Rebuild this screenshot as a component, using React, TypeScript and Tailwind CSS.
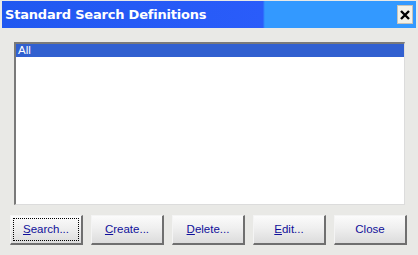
import React from "react";

const buttons = [
  { key: "S", rest: "earch...", focused: true },
  { key: "C", rest: "reate..." },
  { key: "D", rest: "elete..." },
  { key: "E", rest: "dit..." },
  { key: "", rest: "Close" },
];

function DlgButton({ k, rest, focused }: { k: string; rest: string; focused?: boolean }) {
  return (
    <button className="relative h-[30px] w-[73px] border-t border-l border-t-[#f4f4f4] border-l-[#f4f4f4] border-r-2 border-b-2 border-r-[#6f6f6f] border-b-[#6f6f6f] bg-[linear-gradient(to_bottom,#fbfbfb_0%,#efefef_45%,#dcdcdc_100%)] text-[11.5px] text-[#10109a] font-['Liberation_Sans',Arial,sans-serif]">
      {focused && (
        <span className="absolute inset-[2px] border border-dotted border-black" />
      )}
      {k && <span className="underline">{k}</span>}
      {rest}
    </button>
  );
}

export default function App() {
  return (
    <div className="w-[418px] h-[255px] bg-[#e9e9e6] pt-[1px] pl-[2px] pr-[2px] flex flex-col">
      {/* Title bar */}
      <div className="h-[27px] flex items-center pl-[3px] pr-[3px] bg-[linear-gradient(to_right,#2058f0_0%,#2a5cfa_63%,#3399ff_63.5%,#3399ff_100%)]">
        <span className="flex-1 text-white font-bold text-[13px] font-['DejaVu_Sans',Verdana,sans-serif] tracking-[-0.2px]">
          Standard Search Definitions
        </span>
        <div className="w-[16px] h-[19px] bg-[#f3f1e8] border border-[#c8c4b8] flex items-center justify-center">
          <svg width="10" height="10" viewBox="0 0 10 10">
            <path d="M1 1 L9 9 M9 1 L1 9" stroke="#000" strokeWidth="2.4" />
          </svg>
        </div>
      </div>

      {/* List */}
      <div className="mt-[14px] ml-[12px] mr-[11px] h-[163px] bg-white border-t-2 border-l-2 border-t-[#7a7a7a] border-l-[#7a7a7a] border-b border-r border-b-[#dcdcdc] border-r-[#dcdcdc]">
        <div className="h-[13px] bg-[#3160d0] text-white text-[11.5px] leading-[13px] pl-[2px] font-['Liberation_Sans',Arial,sans-serif]">
          All
        </div>
      </div>

      {/* Buttons */}
      <div className="mt-[10px] ml-[8px] flex gap-[8px]">
        {buttons.map((b) => (
          <DlgButton key={b.rest} k={b.key} rest={b.rest} focused={b.focused} />
        ))}
      </div>
    </div>
  );
}
